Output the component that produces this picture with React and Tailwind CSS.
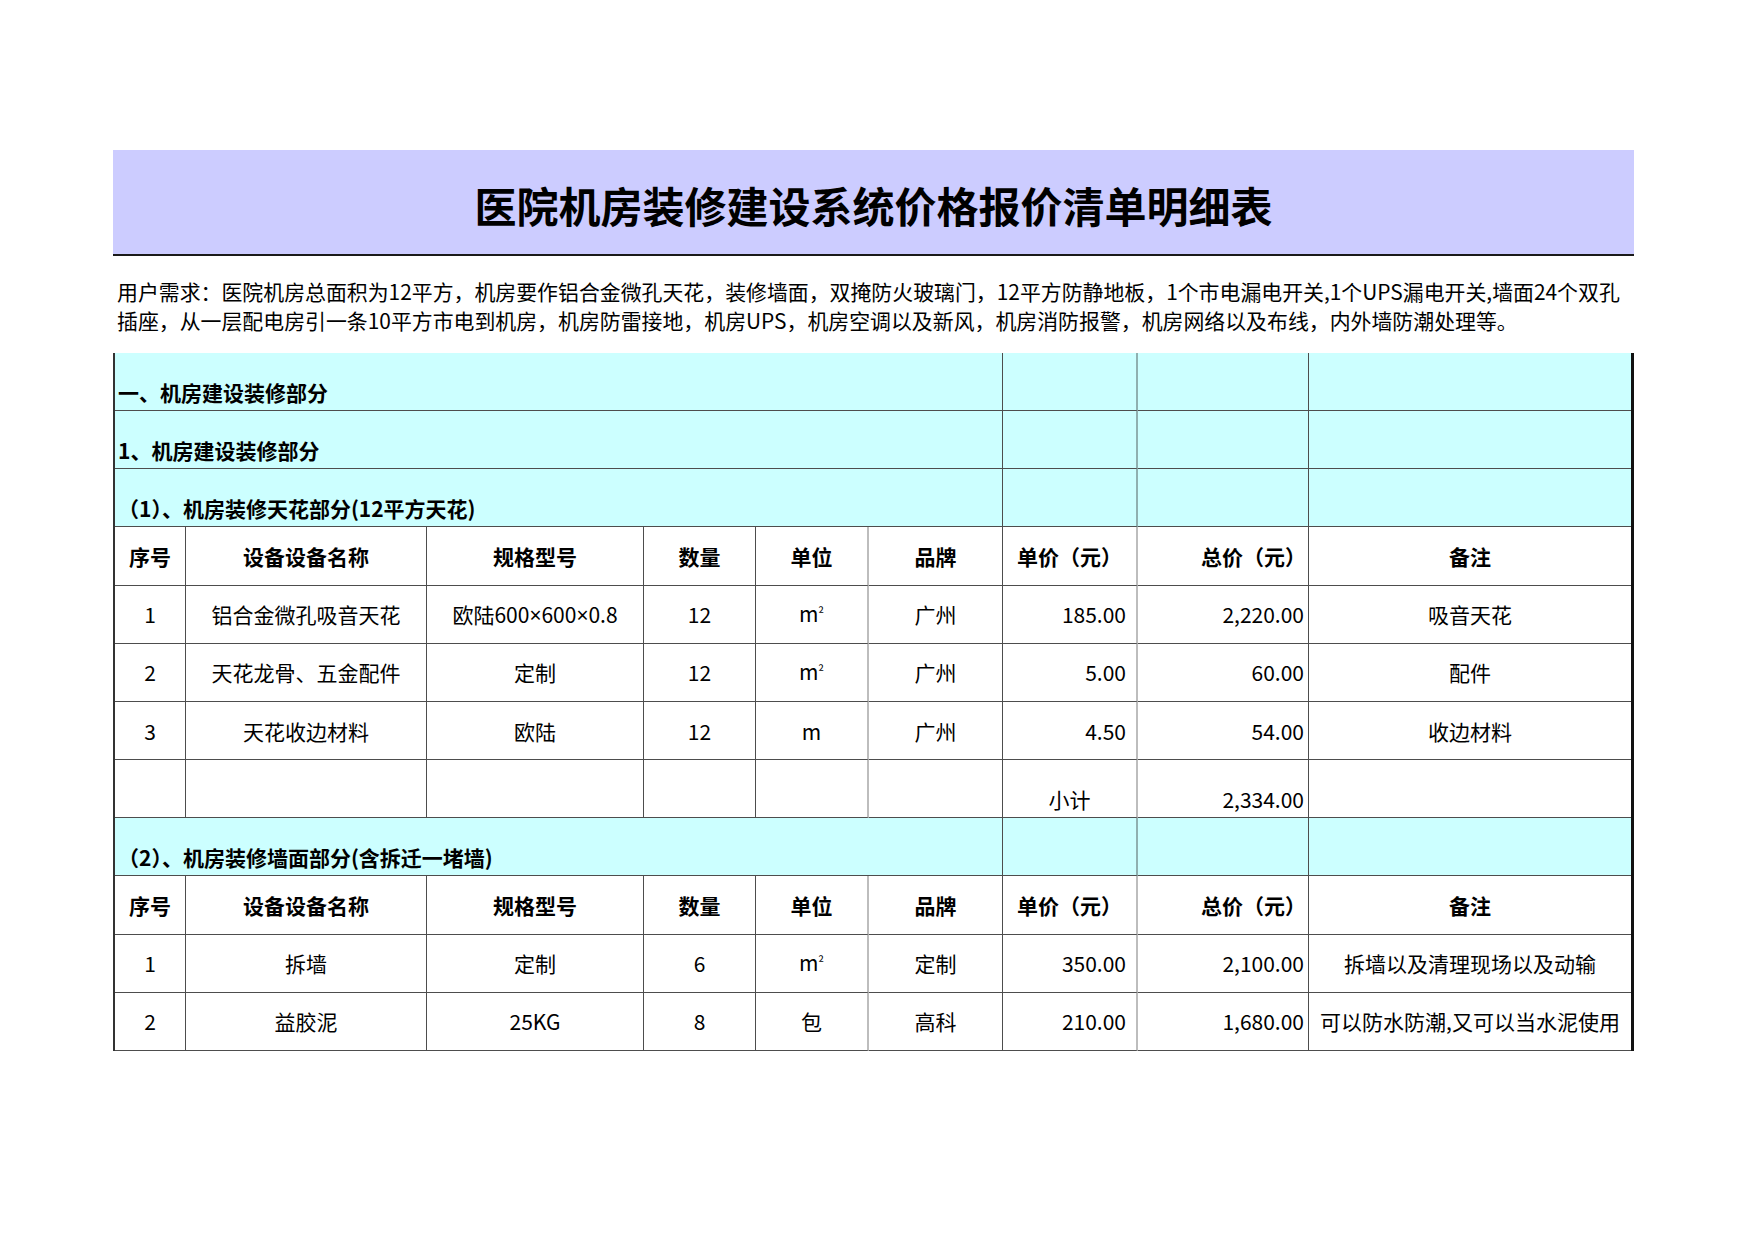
import React from "react";

const groups = [
  {
    title: "（1）、机房装修天花部分(12平方天花)",
    rows: [
      ["1", "铝合金微孔吸音天花", "欧陆600×600×0.8", "12", "m²", "广州", "185.00", "2,220.00", "吸音天花"],
      ["2", "天花龙骨、五金配件", "定制", "12", "m²", "广州", "5.00", "60.00", "配件"],
      ["3", "天花收边材料", "欧陆", "12", "m", "广州", "4.50", "54.00", "收边材料"],
    ],
    subtotal: "2,334.00",
  },
  {
    title: "（2）、机房装修墙面部分(含拆迁一堵墙)",
    rows: [
      ["1", "拆墙", "定制", "6", "m²", "定制", "350.00", "2,100.00", "拆墙以及清理现场以及动输"],
      ["2", "益胶泥", "25KG", "8", "包", "高科", "210.00", "1,680.00", "可以防水防潮,又可以当水泥使用"],
    ],
  },
];

const headers = ["序号", "设备设备名称", "规格型号", "数量", "单位", "品牌", "单价（元）", "总价（元）", "备注"];

// right border of each column, light grey after 单位 and 单价
const colBorder = [
  "border-r border-r-[#4d4d4d]",
  "border-r border-r-[#4d4d4d]",
  "border-r border-r-[#4d4d4d]",
  "border-r border-r-[#4d4d4d]",
  "border-r-2 border-r-[#bdbdbd]",
  "border-r border-r-[#4d4d4d]",
  "border-r-2 border-r-[#bdbdbd]",
  "border-r border-r-[#4d4d4d]",
  "",
];

const dataAlign = [
  "justify-center",
  "justify-center",
  "justify-center",
  "justify-center",
  "justify-center",
  "justify-center",
  "justify-end pr-[10px]",
  "justify-end pr-[4px]",
  "justify-center",
];

const headAlign = [
  "justify-center",
  "justify-center",
  "justify-center",
  "justify-center",
  "justify-center",
  "justify-center",
  "justify-center",
  "justify-end pr-[2px]",
  "justify-center",
];

const Cell = ({ className = "", children }) => (
  <div className={`flex whitespace-nowrap border-b border-b-[#4d4d4d] ${className}`}>{children}</div>
);

const Value = ({ v }) => {
  if (v === "m²") {
    return (
      <span>
        m<span className="text-[14px] relative -top-[3px]">²</span>
      </span>
    );
  }
  if (v.includes("×")) {
    // the cross is narrow in the sheet
    const parts = v.split("×");
    return (
      <span>
        {parts.map((p, i) => (
          <React.Fragment key={i}>
            {i > 0 && <span className="font-['Noto_Sans',sans-serif]">×</span>}
            {p}
          </React.Fragment>
        ))}
      </span>
    );
  }
  return <span>{v}</span>;
};

const SectionRow = ({ title }) => (
  <>
    <Cell className="col-span-6 items-end pl-[3px] pb-[3px] font-bold bg-[#ccffff] border-r border-r-[#4d4d4d]">
      {title}
    </Cell>
    <Cell className="bg-[#ccffff] border-r-2 border-r-[#8fb0b0]" />
    <Cell className="bg-[#ccffff] border-r border-r-[#4d4d4d]" />
    <Cell className="bg-[#ccffff]" />
  </>
);

const HeaderRow = () => (
  <>
    {headers.map((h, i) => (
      <Cell key={h} className={`items-center font-bold ${colBorder[i]} ${headAlign[i]}`}>
        {h}
      </Cell>
    ))}
  </>
);

export default function App() {
  return (
    <div className="w-[1754px] h-[1240px] bg-white text-black font-['Noto_Sans_CJK_SC','Noto_Sans',sans-serif]">
      <div className="pt-[150px] pl-[113px] w-[1634px]">
        <div className="h-[106px] bg-[#ccccff] border-b-2 border-b-[#1a1a1a] flex items-center justify-center pt-[6px]">
          <h1 className="text-[42px] font-bold leading-none">医院机房装修建设系统价格报价清单明细表</h1>
        </div>

        <div className="mt-[21px] pl-[4px] text-[20.9px] leading-[29px] whitespace-nowrap">
          <div>
            用户需求：医院机房总面积为12平方，机房要作铝合金微孔天花，装修墙面，双掩防火玻璃门，12平方防静地板，1个市电漏电开关,1个UPS漏电开关,墙面24个双孔
          </div>
          <div>
            插座，从一层配电房引一条10平方市电到机房，机房防雷接地，机房UPS，机房空调以及新风，机房消防报警，机房网络以及布线，内外墙防潮处理等。
          </div>
        </div>

        <div className="mt-[18px] grid grid-cols-[71px_241px_217px_112px_113px_134px_135px_171px_322px] auto-rows-[58.17px] border-l-2 border-l-[#333] border-r-[3px] border-r-[#111] text-[21px] leading-[30px]">
          <SectionRow title="一、机房建设装修部分" />
          <SectionRow title="1、机房建设装修部分" />
          {groups.map((g) => (
            <React.Fragment key={g.title}>
              <SectionRow title={g.title} />
              <HeaderRow />
              {g.rows.map((r) =>
                r.map((v, i) => (
                  <Cell key={`${r[0]}-${i}`} className={`items-center ${colBorder[i]} ${dataAlign[i]}`}>
                    <Value v={v} />
                  </Cell>
                ))
              )}
              {g.subtotal && (
                <>
                  {[0, 1, 2, 3, 4, 5].map((i) => (
                    <Cell key={i} className={colBorder[i]} />
                  ))}
                  <Cell className={`items-end justify-center pb-[3px] ${colBorder[6]}`}>小计</Cell>
                  <Cell className={`items-end justify-end pr-[4px] pb-[3px] ${colBorder[7]}`}>{g.subtotal}</Cell>
                  <Cell />
                </>
              )}
            </React.Fragment>
          ))}
        </div>
      </div>
    </div>
  );
}
